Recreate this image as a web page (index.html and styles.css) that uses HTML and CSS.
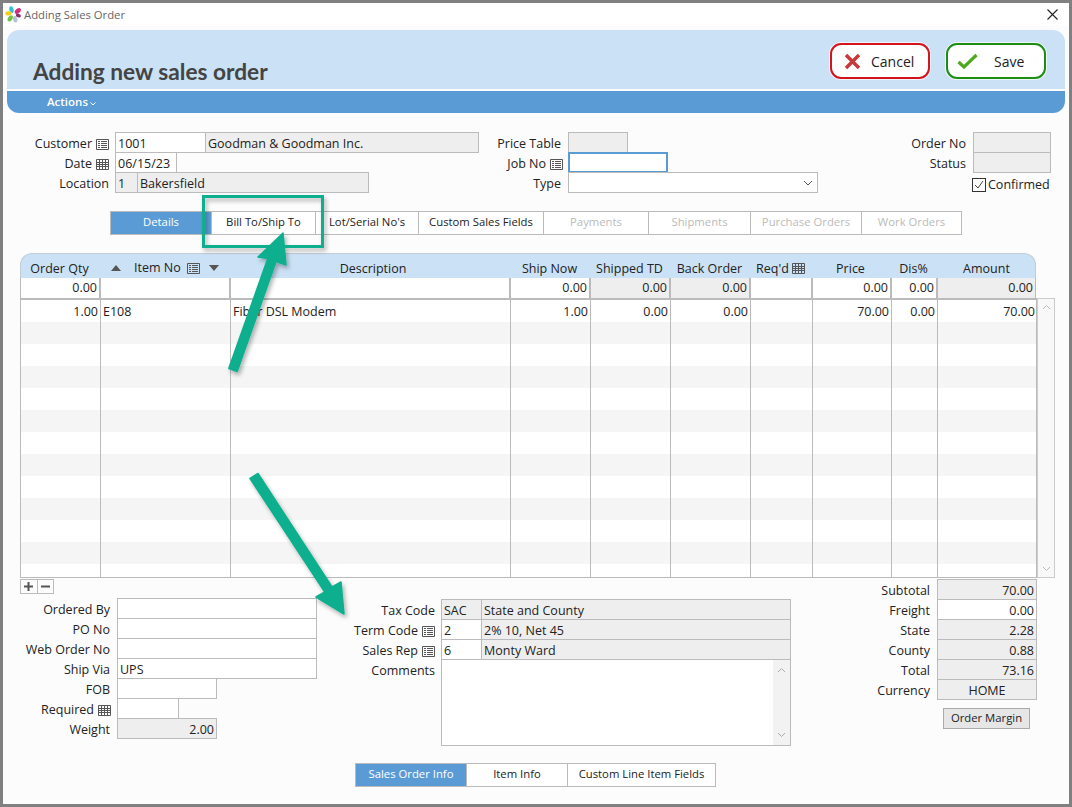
FILE: index.html
```html
<!DOCTYPE html>
<html lang="en">
<head>
<meta charset="utf-8">
<title>Adding Sales Order</title>
<link rel="stylesheet" href="styles.css">
</head>
<body>
<svg class="defs" width="0" height="0" aria-hidden="true">
  <symbol id="i-list" viewBox="0 0 13 11"><path d="M.5.5h12v10H.5zM2 2.5h2M5 2.5h6M2 4.5h2M5 4.5h6M2 6.5h2M5 6.5h6M2 8.5h2M5 8.5h6" fill="none" stroke="#555"/></symbol>
  <symbol id="i-cal" viewBox="0 0 13 11"><path d="M.5.5h12v10H.5zM.5 3.5h12M.5 5.5h12M.5 7.5h12M3.5.5v10M6.5.5v10M9.5.5v10" fill="none" stroke="#555"/></symbol>
</svg>
<div class="window">
  <div class="titlebar">
    <svg class="logo" width="17" height="17" viewBox="0 0 17 17">
      <ellipse cx="6.5" cy="3.6" rx="2.1" ry="3.4" transform="rotate(-15 6.5 3.6)" fill="#35bde0"/>
      <ellipse cx="12.8" cy="5" rx="2.2" ry="3.6" transform="rotate(50 12.8 5)" fill="#d32f78"/>
      <ellipse cx="3.4" cy="7.4" rx="2.2" ry="3.2" transform="rotate(85 3.4 7.4)" fill="#f4cc1c"/>
      <ellipse cx="5.2" cy="12.4" rx="2.2" ry="3.4" transform="rotate(35 5.2 12.4)" fill="#72c248"/>
      <ellipse cx="10.2" cy="13.2" rx="2.2" ry="3.4" transform="rotate(-15 10.2 13.2)" fill="#b4c2da"/>
      <ellipse cx="13.4" cy="9.6" rx="1.8" ry="2.6" transform="rotate(-70 13.4 9.6)" fill="#8e2a6e"/>
    </svg>
    <span class="title">Adding Sales Order</span>
    <svg class="close" width="11" height="11" viewBox="0 0 11 11"><path d="M.5.5l10 10M10.5.5l-10 10" stroke="#222" stroke-width="1.1" fill="none"/></svg>
  </div>

  <div class="header">
    <h1>Adding new sales order</h1>
    <div class="actions">
      <button class="btn btn-cancel" type="button">
        <svg class="btn-x" width="17" height="17" viewBox="0 0 17 17"><path d="M2 2l13 13M15 2L2 15" stroke="#c8373a" stroke-width="3.4" fill="none"/></svg>
        <span>Cancel</span>
      </button>
      <button class="btn btn-save" type="button">
        <svg class="btn-check" width="21" height="16" viewBox="0 0 21 16"><path d="M1.5 9l5.5 5L19.5 2" stroke="#4fa81e" stroke-width="3.2" fill="none"/></svg>
        <span>Save</span>
      </button>
    </div>
  </div>
  <div class="actionbar"><span class="actions-label">Actions</span><svg width="6" height="4" viewBox="0 0 6 4"><path d="M.5.5L3 3 5.5.5" stroke="#fff" fill="none"/></svg></div>

  <div class="form-top">
    <div class="col col-a">
      <div class="row"><span class="lbl">Customer<svg class="ic"><use href="#i-list"/></svg></span><span class="c w90">1001</span><span class="c ro w275">Goodman &amp; Goodman Inc.</span></div>
      <div class="row"><span class="lbl">Date<svg class="ic"><use href="#i-cal"/></svg></span><span class="c w62">06/15/23</span></div>
      <div class="row"><span class="lbl">Location</span><span class="c ro w23">1</span><span class="c ro w232">Bakersfield</span></div>
    </div>
    <div class="col col-b">
      <div class="row"><span class="lbl plain">Price Table</span><span class="c ro w60"></span></div>
      <div class="row"><span class="lbl">Job No<svg class="ic"><use href="#i-list"/></svg></span><span class="c w100 focus"></span></div>
      <div class="row"><span class="lbl plain">Type</span><span class="c w250 select"><svg width="10" height="6" viewBox="0 0 10 6"><path d="M1 1l4 4 4-4" stroke="#555" fill="none"/></svg></span></div>
    </div>
    <div class="col col-c">
      <div class="row"><span class="lbl">Order No</span><span class="c ro w78"></span></div>
      <div class="row"><span class="lbl">Status</span><span class="c ro w78"></span></div>
      <div class="row check-row"><span class="box"><svg width="12" height="12" viewBox="0 0 12 12"><path d="M2 6l3 3 5-7" stroke="#444" fill="none"/></svg></span><span>Confirmed</span></div>
    </div>
  </div>

  <div class="tabs tabs-main">
    <span class="tab active">Details</span>
    <span class="tab">Bill To/Ship To</span>
    <span class="tab">Lot/Serial No's</span>
    <span class="tab">Custom Sales Fields</span>
    <span class="tab off">Payments</span>
    <span class="tab off">Shipments</span>
    <span class="tab off">Purchase Orders</span>
    <span class="tab off">Work Orders</span>
  </div>

  <div class="grid">
    <div class="g-head">
      <span>Order Qty</span>
      <span class="item-h"><i class="tri up"></i><span>Item No</span><svg class="ic"><use href="#i-list"/></svg><i class="tri down"></i></span>
      <span>Description</span>
      <span>Ship Now</span>
      <span>Shipped TD</span>
      <span>Back Order</span>
      <span>Req'd<svg class="ic ic-h"><use href="#i-cal"/></svg></span>
      <span>Price</span>
      <span>Dis%</span>
      <span>Amount</span>
    </div>
    <div class="g-filter">
      <span class="n">0.00</span><span></span><span></span><span class="n">0.00</span><span class="n ro">0.00</span><span class="n ro">0.00</span><span></span><span class="n">0.00</span><span class="n">0.00</span><span class="n ro">0.00</span>
    </div>
    <div class="g-body-wrap">
      <div class="g-body">
        <div class="g-row"><span class="n">1.00</span><span>E108</span><span>Fiber DSL Modem</span><span class="n">1.00</span><span class="n">0.00</span><span class="n">0.00</span><span></span><span class="n">70.00</span><span class="n">0.00</span><span class="n">70.00</span></div>
        <div class="g-row"><i></i><i></i><i></i><i></i><i></i><i></i><i></i><i></i><i></i><i></i></div>
        <div class="g-row"><i></i><i></i><i></i><i></i><i></i><i></i><i></i><i></i><i></i><i></i></div>
        <div class="g-row"><i></i><i></i><i></i><i></i><i></i><i></i><i></i><i></i><i></i><i></i></div>
        <div class="g-row"><i></i><i></i><i></i><i></i><i></i><i></i><i></i><i></i><i></i><i></i></div>
        <div class="g-row"><i></i><i></i><i></i><i></i><i></i><i></i><i></i><i></i><i></i><i></i></div>
        <div class="g-row"><i></i><i></i><i></i><i></i><i></i><i></i><i></i><i></i><i></i><i></i></div>
        <div class="g-row"><i></i><i></i><i></i><i></i><i></i><i></i><i></i><i></i><i></i><i></i></div>
        <div class="g-row"><i></i><i></i><i></i><i></i><i></i><i></i><i></i><i></i><i></i><i></i></div>
        <div class="g-row"><i></i><i></i><i></i><i></i><i></i><i></i><i></i><i></i><i></i><i></i></div>
        <div class="g-row"><i></i><i></i><i></i><i></i><i></i><i></i><i></i><i></i><i></i><i></i></div>
        <div class="g-row"><i></i><i></i><i></i><i></i><i></i><i></i><i></i><i></i><i></i><i></i></div>
        <div class="g-row g-last"><i></i><i></i><i></i><i></i><i></i><i></i><i></i><i></i><i></i><i></i></div>
      </div>
      <div class="vscroll">
        <svg width="9" height="6" viewBox="0 0 9 6"><path d="M1 5l3.5-3.5L8 5" stroke="#bbb" fill="none"/></svg>
        <svg width="9" height="6" viewBox="0 0 9 6"><path d="M1 1l3.5 3.5L8 1" stroke="#bbb" fill="none"/></svg>
      </div>
    </div>
  </div>

  <div class="form-bottom">
    <div class="col col-d">
      <div class="pm">
        <span><svg width="9" height="9" viewBox="0 0 9 9"><path d="M4.5 0v9M0 4.5h9" stroke="#555" stroke-width="2"/></svg></span>
        <span><svg width="9" height="9" viewBox="0 0 9 9"><path d="M0 4.5h9" stroke="#555" stroke-width="2"/></svg></span>
      </div>
      <div class="row"><span class="lbl">Ordered By</span><span class="c w200"></span></div>
      <div class="row"><span class="lbl">PO No</span><span class="c w200"></span></div>
      <div class="row"><span class="lbl">Web Order No</span><span class="c w200"></span></div>
      <div class="row"><span class="lbl">Ship Via</span><span class="c w200">UPS</span></div>
      <div class="row"><span class="lbl">FOB</span><span class="c w100"></span></div>
      <div class="row"><span class="lbl">Required<svg class="ic"><use href="#i-cal"/></svg></span><span class="c w62"></span></div>
      <div class="row"><span class="lbl">Weight</span><span class="c ro w100 right">2.00</span></div>
    </div>
    <div class="col col-e">
      <div class="row"><span class="lbl">Tax Code</span><span class="c ro w40">SAC</span><span class="c ro w311">State and County</span></div>
      <div class="row"><span class="lbl">Term Code<svg class="ic"><use href="#i-list"/></svg></span><span class="c w40">2</span><span class="c ro w311">2% 10, Net 45</span></div>
      <div class="row"><span class="lbl">Sales Rep<svg class="ic"><use href="#i-list"/></svg></span><span class="c w40">6</span><span class="c ro w311">Monty Ward</span></div>
      <div class="row"><span class="lbl">Comments</span>
        <span class="c memo">
          <span class="memo-bar">
            <svg width="9" height="6" viewBox="0 0 9 6"><path d="M1 5l3.5-3.5L8 5" stroke="#aaa" fill="none"/></svg>
            <svg width="9" height="6" viewBox="0 0 9 6"><path d="M1 1l3.5 3.5L8 1" stroke="#aaa" fill="none"/></svg>
          </span>
        </span>
      </div>
    </div>
    <div class="col col-f">
      <div class="row"><span class="lbl">Subtotal</span><span class="c ro w100 right">70.00</span></div>
      <div class="row"><span class="lbl">Freight</span><span class="c w100 right">0.00</span></div>
      <div class="row"><span class="lbl">State</span><span class="c ro w100 right">2.28</span></div>
      <div class="row"><span class="lbl">County</span><span class="c ro w100 right">0.88</span></div>
      <div class="row"><span class="lbl">Total</span><span class="c ro w100 right">73.16</span></div>
      <div class="row"><span class="lbl">Currency</span><span class="c ro w100 center">HOME</span></div>
      <button class="margin-btn" type="button">Order Margin</button>
    </div>
  </div>

  <div class="tabs tabs-bottom">
    <span class="tab active">Sales Order Info</span>
    <span class="tab">Item Info</span>
    <span class="tab">Custom Line Item Fields</span>
  </div>

  <svg class="annot" width="1072" height="807" viewBox="0 0 1072 807" aria-hidden="true">
    <defs>
      <filter id="sh" x="-20%" y="-20%" width="140%" height="140%"><feDropShadow dx="2" dy="3" stdDeviation="2" flood-color="#000" flood-opacity=".3"/></filter>
    </defs>
    <g filter="url(#sh)">
      <rect x="203.5" y="196.5" width="119" height="50" fill="none" stroke="#0caf8e" stroke-width="3"/>
      <path d="M228.8 368.5L237.2 371.5 276 261.5 286 265 283 233 258 257 267.8 258.5Z" fill="#0caf8e" stroke="#0caf8e" stroke-width="1.5" stroke-linejoin="round"/>
      <path d="M250 478.5L258 473.5 332 587 341 582 344 614 316 597 324.8 592Z" fill="#0caf8e" stroke="#0caf8e" stroke-width="1.5" stroke-linejoin="round"/>
    </g>
  </svg>
</div>
</body>
</html>
```
FILE: styles.css
```css
* { box-sizing: border-box; }
html, body { margin: 0; padding: 0; }
body { background: #fff; font-family: "Open Sans", "Noto Sans", sans-serif; font-size: 12.5px; color: #222; }
.defs { position: absolute; }
.window { position: relative; width: 1072px; height: 807px; border: 3px solid #808080; background: #fcfcfc; overflow: hidden; }
.titlebar { height: 23px; background: #fff; display: flex; align-items: center; position: relative; padding-left: 2px; }
.logo { flex: none; margin-top: -1px; }
.title { margin-left: 2px; color: #666; font-size: 11.3px; }
.close { margin-left: auto; margin-right: 11px; margin-top: -1px; }

.header { margin: 4px 4px 0; height: 59px; background: #cbe1f5; border-radius: 12px 12px 0 0; display: flex; justify-content: space-between; }
h1 { margin: 28px 0 0 26px; font-family: Lato, sans-serif; font-size: 22.7px; line-height: 28px; font-weight: 700; color: #444; }
.actions { display: flex; gap: 16px; margin: 13px 19px 0 0; align-items: flex-start; }
.btn { width: 100px; height: 36px; border-radius: 11px; background: #fff; padding: 0; display: flex; align-items: center; font: inherit; font-size: 14px; color: #222; box-shadow: 0 0 0 1px #eef5fb; }
.btn-cancel { border: 2px solid #d4141c; }
.btn-save { border: 2px solid #1e8e12; }
.btn-x { margin-left: 12px; }
.btn-cancel span { margin-left: 10px; }
.btn-check { margin-left: 9px; }
.btn-save span { margin-left: 16px; }
.actionbar { margin: 2px 4px 0; height: 22px; background: #5b9bd5; border-radius: 0 0 12px 12px; color: #fff; padding: 0 0 2px 40px; display: flex; align-items: center; gap: 2px; font-weight: 600; font-size: 11.5px; }
.actionbar svg { margin-top: 5px; }

.form-top { display: flex; margin-top: 19px; }
.col { flex: none; }
.row { display: flex; height: 20px; }
.lbl { flex: none; display: flex; justify-content: flex-end; align-items: center; height: 21px; padding-top: 3px; line-height: 20px; white-space: pre; }
.ic { width: 13px; height: 11px; margin-left: 4px; flex: none; }
.c { flex: none; display: block; height: 21px; line-height: 20px; border: 1px solid #bbb; background: #fff; padding: 1px 2px 0; margin-right: -1px; white-space: nowrap; }
.ro { background: #eee; }
.right { text-align: right; }
.center { text-align: center; }
.w23 { width: 23px; } .w40 { width: 41px; } .w60 { width: 60px; } .w62 { width: 62px; } .w78 { width: 78px; } .w90 { width: 91px; }
.w100 { width: 100px; } .w200 { width: 200px; } .w232 { width: 232px; } .w250 { width: 250px; } .w275 { width: 274px; } .w311 { width: 310px; }
.focus { border: 2px solid #5b9bd5; }
.select { display: flex; justify-content: flex-end; align-items: center; padding: 0 4px 0 2px; }

.col-a { width: 476px; }
.col-a .lbl { width: 106px; margin-right: 6px; }
.col-b { width: 339px; }
.col-b .lbl { width: 84px; margin-right: 5px; }
.col-b .lbl.plain { padding-right: 2px; }
.col-c { width: 240px; }
.col-c .lbl { width: 148px; margin-right: 7px; }
.check-row { margin-left: 154px; height: 22px; align-items: center; gap: 2px; line-height: 20px; padding-top: 3px; }
.box { width: 14px; height: 14px; border: 1px solid #333; background: #fff; display: flex; align-items: center; justify-content: center; }

.tabs { display: grid; height: 24px; border: 1px solid #bbb; background: #fff; }
.tab { display: flex; align-items: center; justify-content: center; border-left: 1px solid #bbb; font-size: 11.3px; padding-bottom: 4px; white-space: nowrap; }
.tab:first-child { border-left: 0; }
.tab.active { background: #5b9bd5; color: #fff; }
.tab.off { color: #bbb; }
.tabs-main { margin: 17px 0 0 107px; width: 852px; grid-template-columns: 100px 104px 103px 125px 105px 102px 111px 1fr; }
.tabs-bottom { margin: 0 0 0 352px; width: 361px; grid-template-columns: 110px 101px 1fr; }

.grid { margin: 18px 0 0 17px; }
.g-head, .g-filter { display: grid; grid-template-columns: 80px 130px 280px 80px 80px 80px 62px 79px 46px 1fr; width: 1016px; }
.g-row { display: grid; grid-template-columns: 80px 130px 280px 80px 80px 80px 62px 79px 46px 99px; width: 1017px; }
.g-head { height: 25px; background: #cbe1f5; border-radius: 12px 12px 0 0; border: 1px solid #c0cdd9; border-bottom: 0; text-align: center; line-height: 29px; }
.g-head > span { display: block; padding-right: 3px; }
.g-head > span:nth-child(3) { padding: 0 0 0 4px; }
.g-head > span:nth-child(8) { padding-right: 4px; }
.g-head > span:nth-child(10) { padding-right: 0; }
.ic-h { margin-left: 3px; vertical-align: -1px; }
.g-head .item-h { position: relative; display: flex; align-items: center; justify-content: flex-start; height: 24px; padding-top: 4px; line-height: 20px; }
.item-h > span { margin-left: 33px; }
.item-h .ic { margin-left: 6px; }
.tri { width: 0; height: 0; border-left: 5px solid transparent; border-right: 5px solid transparent; position: absolute; }
.tri.up { border-bottom: 6px solid #555; left: 10px; top: 11px; }
.tri.down { border-top: 6px solid #555; left: 108px; top: 11px; }
.g-filter { height: 20px; background: #fff; border: 1px solid #bbb; border-width: 0 1px; }
.g-filter > span { border-right: 2px solid #bbb; border-bottom: 2px solid #bbb; line-height: 20px; padding: 0 2px; }
.g-filter > span:last-child { border-right: 0; }
.n { text-align: right; }
.g-body-wrap { display: flex; margin-top: 0; }
.g-body { width: 1017px; height: 280px; border: 1px solid #bbb; border-top-width: 2px; overflow: hidden; }
.g-row { height: 22px; background: #fff; margin-right: -2px; }
.g-row:nth-child(even) { background: #f5f5f5; }
.g-row > * { display: block; border-right: 1px solid #bbb; line-height: 22px; padding: 1px 2px 0; height: 22px; white-space: nowrap; }
.g-row > *:last-child { border-right: 0; }
.vscroll { width: 18px; height: 280px; border: 1px solid #ccc; background: #f8f8f8; display: flex; flex-direction: column; justify-content: space-between; align-items: center; padding: 5px 0; }

.form-bottom { display: flex; height: 185px; }
.col-d { width: 342px; padding-left: 17px; padding-top: 1px; }
.col-d .lbl { width: 90px; margin-right: 7px; }
.col-d .ic { margin-right: -1px; }
.pm { display: flex; width: 34px; height: 15px; border: 1px solid #bbb; margin-bottom: 4px; background: #fcfcfc; }
.pm span { flex: 1; display: flex; align-items: center; justify-content: center; }
.pm span + span { border-left: 1px solid #bbb; }
.col-e { width: 446px; padding-top: 21px; }
.col-e .lbl { width: 90px; margin-right: 6px; }
.memo { width: 350px; height: 87px; position: relative; padding: 0; }
.memo-bar { position: absolute; right: 0; top: 0; bottom: 0; width: 17px; background: #f2f2f2; display: flex; flex-direction: column; justify-content: space-between; align-items: center; padding: 7px 0; }
.col-f { width: 246px; padding-top: 1px; }
.col-f .lbl { width: 139px; margin-right: 7px; }
.margin-btn { display: block; margin: 9px 0 0 152px; width: 87px; height: 21px; background: #e6e6e6; border: 1px solid #aaa; padding: 0 0 2px; font: inherit; font-size: 11.3px; color: #222; }
.annot { position: absolute; left: -3px; top: -3px; pointer-events: none; }
```
